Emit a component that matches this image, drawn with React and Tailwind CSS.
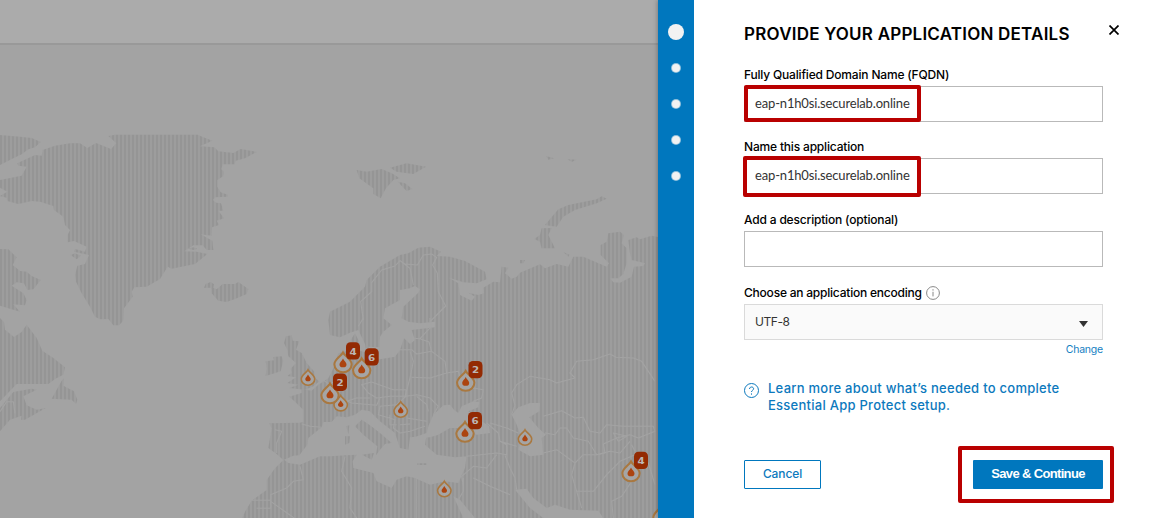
import React from "react";

const LARGE_PINS = [
  { x: 343, y: 363, n: 4, bx: 353, by: 351 },
  { x: 361.7, y: 369, n: 6, bx: 371.7, by: 357 },
  { x: 330, y: 394, n: 2, bx: 340, by: 382.3 },
  { x: 465.7, y: 381.5, n: 2, bx: 475.5, by: 369.7 },
  { x: 465, y: 432.5, n: 6, bx: 475, by: 420.7 },
  { x: 631, y: 472, n: 4, bx: 641, by: 460.5 },
  { x: 662, y: 516, n: null },
];

const SMALL_PINS = [
  { x: 308, y: 378 },
  { x: 340.7, y: 403.7 },
  { x: 400.7, y: 410 },
  { x: 525, y: 438 },
  { x: 444.3, y: 489.5 },
];

function Drop({ x, y, scale }) {
  return (
    <g transform={`translate(${x} ${y}) scale(${scale})`}>
      <path
        d="M0 -10.2 C2 -6.4 8.4 -3.6 8.4 1.2 A8.4 7.8 0 0 1 -8.4 1.2 C-8.4 -3.6 -2 -6.4 0 -10.2Z"
        fill="#a5a5a5"
        stroke="#a97840"
        strokeWidth="2"
      />
      <path d="M0 -4.4 C1 -2 3.4 -.6 3.4 1.1 A3.4 3.1 0 0 1 -3.4 1.1 C-3.4 -.6 -1 -2 0 -4.4Z" fill="#ac4410" />
    </g>
  );
}

function WorldMap() {
  return (
    <svg className="block h-[473px] w-[658px]" viewBox="0 45 658 473">
      <defs>
        <pattern id="stripes" width="4" height="4" patternUnits="userSpaceOnUse">
          <rect width="4" height="4" fill="#9d9d9d" />
          <rect width="2" height="4" fill="#959595" />
        </pattern>
        <mask id="land" maskUnits="userSpaceOnUse" x="0" y="0" width="658" height="518">
          <g transform="scale(.333333)" fill="#fff">
            <g transform="translate(0 360)">
              <path d="M0 45L60 50L95 54L122 66L105 82L85 88L65 103L40 115L0 135Z" />
              <path d="M0 180L65 167L80 140L55 137L52 130L105 105L125 107L128 90L165 77L210 70L240 70L262 84L288 69L333 87L349 70L325 48L345 44L593 44L610 52L637 62L600 79L643 82L655 94L700 99L722 87L770 96L735 115L707 122L704 133L668 133L664 148L672 155L670 168L652 180L652 200L662 217L683 224L683 230L645 232L639 240L648 248L663 250L670 272L655 272L672 295L650 302L657 315L636 322L635 347L602 343L637 362L640 390L620 390L608 376L580 376L553 394L590 395L622 402L585 432L515 446L503 440L480 477L440 500L403 502L395 515L398 530L372 565L370 600L367 605L357 616L340 616L325 597L300 598L285 590L270 560L245 520L228 485L225 465L232 437L255 432L267 405L222 395L225 387L255 395L260 380L222 363L203 367L203 345L210 330L195 315L190 290L162 270L160 258L120 245L95 243L55 252L22 243L20 233L0 228L22 215L0 203Z" />
              <path d="M212 405L225 400L242 407L230 418ZM565 386L580 382L592 386L580 390Z" />
              <path d="M0 387L25 388L50 412L38 435L60 453L80 455L95 468L122 480L100 508L82 510L72 490L50 487L35 497L70 520L80 540L75 556L40 553L60 575L0 557Z" />
              <path d="M612 503L617 492L632 486L642 493L640 503L650 508L668 492L705 492L715 486L745 507L740 522L705 537L680 546L655 542L635 520L633 503Z" />
            </g>
            <g transform="translate(0 954)">
              <path d="M0 0L12 12L15 35L42 57L65 42L80 20L110 60L127 98L160 120L195 148L190 170L165 183L145 198L50 198L0 250Z" />
              <path d="M155 242L185 188L192 180L190 203L222 220L232 245L228 258L215 245Z" />
              <path d="M0 270L40 222L95 212L110 215L70 235L80 262L110 275L137 270L75 305L63 305L65 293L30 305L0 340Z" />
              <path d="M852 75L858 55L875 52L878 68L898 70L888 95L905 105L920 135L942 160L945 180L958 190L940 205L915 215L868 210L895 200L862 195L888 178L862 174L875 165L872 152L888 135L865 115L862 95Z" />
              <path d="M797 130L822 127L820 117L845 115L850 128L842 160L797 174L800 150Z" />
            </g>
            <g transform="translate(990 360)">
              <path d="M0 575L60 545L105 500L110 480L150 440L210 405L235 400L265 383L300 380L333 395L320 408L360 410L405 423L465 455L470 478L440 490L400 487L357 473L385 490L390 525L425 542L435 530L415 518L445 525L462 520L460 503L490 485L510 487L515 440L535 443L525 460L545 476L560 470L570 458L630 433L645 445L680 432L715 440L730 410L760 410L830 440L837 430L812 405L812 375L830 365L835 340L870 335L882 345L875 370L890 385L890 430L880 462L865 475L840 475L850 487L870 488L905 470L912 440L940 438L945 430L905 420L900 400L895 360L920 352L930 358L965 347L990 352L990 1200L-265 1200L-255 1175L-235 1142L-190 1110L-190 1080L-165 1045L-140 1020L-160 1002L-185 984L-175 925L-182 910L-90 908L-80 905L-80 870L-105 845L-122 830L-85 819L-85 807L-55 812L-35 794L-5 775L15 735L25 700L60 690L62 660L75 640L88 665L85 690L110 700L105 672L85 630L60 638L30 652L0 645L-5 600Z" />
              <path d="M80 150L110 155L155 147L185 160L210 175L190 180L168 205L152 235L130 222L130 205L88 175ZM180 143L230 130L288 140L250 162L200 155ZM203 185L225 190L247 207L230 213Z" />
              <path d="M645 315L685 268L715 255L800 238L815 229L830 236L800 250L735 270L700 290L680 320ZM613 357L630 345L635 325L665 324L655 345L675 385L635 385L630 365ZM648 108L672 115L655 119ZM713 118L740 119L725 126ZM570 420h15l-5 10h-10ZM700 396l18 8l-3 6Z" />
            </g>
            <g fill="#000" transform="translate(1020 720)">
              <path d="M180 150L210 145L225 138L240 148L235 158L190 200L185 235L205 245L240 250L285 245L285 262L215 270L225 300L210 312L192 295L180 330L165 350L120 358L90 345L85 320L118 322L120 290L130 275L155 255L130 235L135 205L180 180Z" />
            </g>
            <g transform="translate(990 954)">
              <g fill="#000">
                <path d="M-138 425L-110 413L-92 412L-68 380L-65 360L-25 328L-20 312L5 312L20 295L50 298L75 290L95 275L120 280L150 310L195 345L210 390L235 395L240 358L280 355L290 350L285 380L320 410L375 418L410 415L405 450L385 495L345 490L300 500L255 480L230 475L200 485L185 510L140 490L130 465L70 450L68 430L80 410L50 412L0 415L-30 415L-90 440L-125 435Z" />
                <path d="M295 325L310 290L340 262L360 260L372 275L385 285L395 265L430 250L448 252L445 268L415 280L440 300L478 325L480 345L440 350L400 330L360 330L325 350L300 358L240 362L290 345Z" />
                <path d="M545 290L565 268L600 255L630 255L628 280L598 298L625 330L648 350L635 360L640 410L600 415L565 395L575 360L560 320Z" />
                <path d="M370 535L390 545L435 600L400 600ZM555 515L590 512L610 540L650 570L675 560L720 575L805 578L820 600L640 600L600 570Z" />
              </g>
              <path d="M75 325L95 305L120 322L150 345L185 375L165 378L150 395L138 412L142 385L100 350ZM95 410L132 405L125 425ZM45 355L60 355L58 375L45 380ZM48 325L58 322L55 348ZM262 436h28v5h-28Z" />
            </g>
            <g fill="none" stroke="#000" strokeWidth="3.2" strokeLinejoin="round">
              <g transform="translate(990 360)">
                <path d="M100 600L92 545L125 515L125 488L155 450L195 438L210 422L225 432L262 435L280 405L305 402L320 412L308 435L322 460L325 515L347 558L300 605M210 422L240 445L250 495" />
              </g>
              <g transform="translate(990 954)">
                <path d="M100 0L85 25M240 15L242 60L270 62L300 30L300 0M185 95L245 95L260 108L305 100L297 72L270 62M240 100L250 130L240 180L225 235M245 178L300 180L350 165L345 130L325 115L305 100M350 165L385 160L400 205L460 215L455 240L430 250" />
                <path d="M95 200L125 192L160 205L190 215L228 215L228 235L180 235L140 240L115 225ZM20 235L65 255L140 262L150 240M50 250L80 240L120 240M228 235L260 230L300 240L325 265L310 290M228 235L200 260L150 265L145 290L195 305L190 330L210 345L240 340L285 325M260 235L290 260L295 280M230 300L290 310M180 290L180 320L200 320M210 320L240 318" />
                <path d="M545 290L555 262L545 225L560 200L600 175L660 185L680 195L735 180L720 165L740 130L790 125L840 108L858 118L910 120L935 130L975 190" />
                <path d="M640 295L695 278L735 300L760 298L780 340L810 345L830 320L880 325L970 325L975 340L925 360L900 350L860 360L820 378L825 405L800 410L775 370L730 360L710 330L690 330L675 350L645 345" />
                <path d="M640 405L680 395L735 435L760 410L800 410L840 400L870 405L900 370M735 435L725 470L740 520L755 570M740 520L790 520L830 470L870 430L915 410L955 435L975 500M850 600L845 550L875 535L905 490M850 345L890 355L865 370ZM905 380L915 400" />
                <path d="M410 415L500 405L530 410L530 380L510 370L505 345L470 315M480 315L530 330L565 345M510 370L560 385M525 412L540 450L555 480L560 515M400 505L395 475L430 445L470 450L500 410M430 480L480 505L540 530M400 480L400 520L385 545" />
                <path d="M260 480L260 600M45 415L35 460L65 510L60 570L80 600M-85 318L-60 325L-25 328M-165 335L-145 340L-160 375L-160 405M-90 445L-80 485L-110 490L-130 510L-178 530L-178 550L-105 602M-240 547L-178 547M-220 571L-178 571L-178 547M-30 180L0 200L25 180" />
              </g>
              <path d="M0 1235L20 1205L40 1205L45 1240" />
            </g>
          </g>
        </mask>
      </defs>
      <rect y="45" width="658" height="473" fill="url(#stripes)" mask="url(#land)" />
      {SMALL_PINS.map((p) => (
        <Drop key={`${p.x}-${p.y}`} x={p.x} y={p.y} scale={0.8} />
      ))}
      {LARGE_PINS.map((p) => (
        <g key={`${p.x}-${p.y}`}>
          <Drop x={p.x} y={p.y} scale={1.03} />
          {p.n !== null && (
            <>
              <rect x={p.bx - 7} y={p.by - 8.8} width="14" height="17.4" rx="4.5" fill="#932a03" />
              <text
                x={p.bx - 3.6}
                y={p.by + 3.6}
                textLength="7.2"
                lengthAdjust="spacingAndGlyphs"
                className="fill-[#bdb7b4] font-['DejaVu_Sans',sans-serif] text-[9.5px] font-bold"
              >
                {p.n}
              </text>
            </>
          )}
        </g>
      ))}
    </svg>
  );
}

function Field({ label, value, className }) {
  return (
    <label className={`block ${className}`}>
      <span className="block h-[18px] pt-px text-[12px] leading-[18px] font-medium tracking-[-0.18px] whitespace-nowrap">{label}</span>
      <input
        readOnly
        value={value}
        className="mt-[3px] block h-9 w-full border border-[#b9b9b9] bg-white px-[10px] pb-0.5 font-['Lato',sans-serif] text-[13px] tracking-[-0.16px] text-[#333] outline-none"
      />
    </label>
  );
}

export default function App() {
  return (
    <div className="relative flex h-[518px] w-[1151px] overflow-hidden bg-white font-['Inter','Liberation_Sans',sans-serif] text-black">
      <section className="flex w-[658px] flex-col bg-[#a3a3a3]">
        <div className="h-[45px] border-b-2 border-[#999] bg-[#ababab]" />
        <WorldMap />
      </section>

      <nav className="flex w-9 flex-col items-center bg-[#0077be] pt-6 shadow-[-1px_0_4px_rgba(0,0,0,0.25)]">
        <span className="size-4 rounded-full bg-[#f2f2f2]" />
        <span className="mt-[23px] size-[10px] rounded-full border border-[#0077be]/40 bg-[#f2f2f2]" />
        <span className="mt-[26px] size-[10px] rounded-full border border-[#0077be]/40 bg-[#f2f2f2]" />
        <span className="mt-[26px] size-[10px] rounded-full border border-[#0077be]/40 bg-[#f2f2f2]" />
        <span className="mt-[26px] size-[10px] rounded-full border border-[#0077be]/40 bg-[#f2f2f2]" />
      </nav>

      <main className="w-[457px] bg-white pr-12 pl-[50px]">
        <header className="flex h-[65px] justify-between pt-[22px]">
          <h1 className="text-[17px] leading-6 font-semibold tracking-[0.22px] whitespace-nowrap">
            PROVIDE YOUR APPLICATION DETAILS
          </h1>
          <svg className="mt-[3px] -mr-4 size-[10px] shrink-0" viewBox="0 0 10 10" fill="none" stroke="#000" strokeWidth="1.7">
            <path d="M.5.5l9 9M9.5.5l-9 9" />
          </svg>
        </header>

        <Field label="Fully Qualified Domain Name (FQDN)" value="eap-n1h0si.securelab.online" className="" />
        <Field label="Name this application" value="eap-n1h0si.securelab.online" className="mt-[15px]" />
        <Field label="Add a description (optional)" value="" className="mt-4" />

        <div className="mt-4 flex h-[18px] items-center text-[12px] leading-[18px] font-medium tracking-[-0.22px]">
          <span className="pt-px">Choose an application encoding</span>
          <svg className="mt-0.5 ml-1 size-[14px]" viewBox="0 0 14 14" fill="none" stroke="#888">
            <circle cx="7" cy="7" r="6.4" />
            <path d="M7 5.8V10.4M7 3.2v1.4" />
          </svg>
        </div>
        <div className="mt-[3px] flex h-9 items-center justify-between border border-[#dadada] bg-[#fafafa] pr-[14px] pb-px pl-[10px] text-[12px] tracking-[-0.45px] text-[#333]">
          <span>UTF-8</span>
          <svg className="mt-[5px] h-[6px] w-[9px]" viewBox="0 0 9 6">
            <path d="M0 0h9L4.5 6Z" fill="#333" />
          </svg>
        </div>
        <div className="mt-px h-[17px] text-right text-[10.5px] leading-[17px] tracking-[-0.2px] text-[#1580c2]">Change</div>

        <div className="mt-[22px] flex h-[34px] text-[#0c79bd]">
          <svg className="mt-[3px] size-[15px] shrink-0" viewBox="0 0 15 15" fill="none" stroke="#0c79bd">
            <circle cx="7.5" cy="7.5" r="7" />
            <path d="M5.5 6C5.5 3.3 9.6 3.4 9.6 5.8C9.6 7.2 7.6 7.2 7.5 9M7.5 10.4v1.3" />
          </svg>
          <p className="ml-[9px] text-[13px] leading-[17px] font-medium tracking-[0.26px] whitespace-nowrap">
            Learn more about what’s needed to complete
            <br />
            Essential App Protect setup.
          </p>
        </div>

        <footer className="mt-[46px] flex justify-between">
          <button className="h-[29px] w-[77px] rounded-[1px] border border-[#0077be] pb-px text-[12px] font-medium tracking-[-0.1px] text-[#0c79bd]">
            Cancel
          </button>
          <button className="h-[29px] w-[130px] rounded-[1px] bg-[#0077be] pb-0.5 font-['Liberation_Sans',sans-serif] text-[13px] font-bold tracking-[-0.65px] text-white">
            Save &amp; Continue
          </button>
        </footer>
      </main>

      <div className="absolute top-[85px] left-[744px] h-[37px] w-[177px] rounded-[2px] border-4 border-[#b90000]" />
      <div className="absolute top-[156px] left-[743px] h-[41px] w-[178px] rounded-[2px] border-4 border-[#b90000]" />
      <div className="absolute top-[446px] left-[958px] h-[57px] w-[156px] rounded-[2px] border-4 border-[#b90000]" />
    </div>
  );
}
